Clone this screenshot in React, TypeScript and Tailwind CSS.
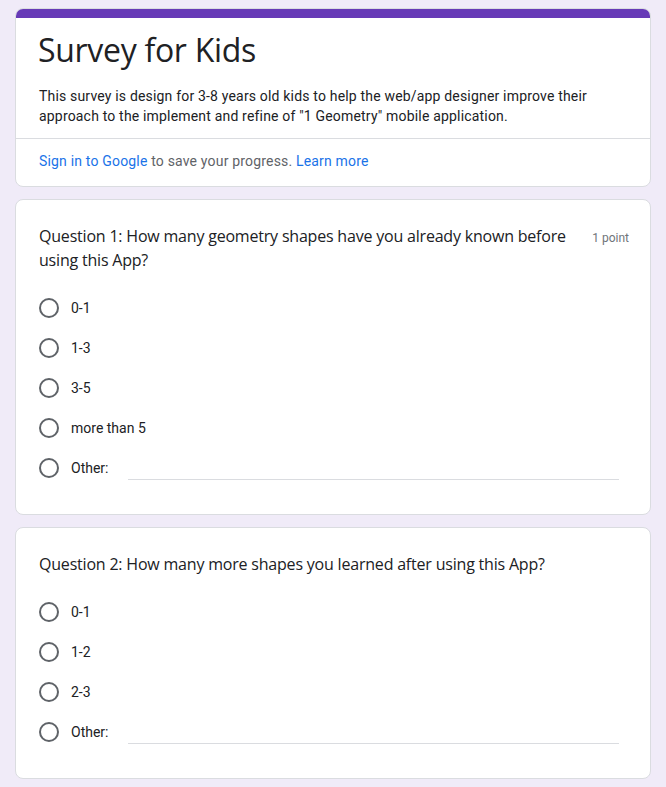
import React from "react";

type Question = {
  title: string;
  points?: string;
  options: string[];
};

const questions: Question[] = [
  {
    title:
      "Question 1: How many geometry shapes have you already known before using this App?",
    points: "1 point",
    options: ["0-1", "1-3", "3-5", "more than 5"],
  },
  {
    title: "Question 2: How many more shapes you learned after using this App?",
    options: ["0-1", "1-2", "2-3"],
  },
];

function Radio() {
  return (
    <span className="block w-5 h-5 shrink-0 rounded-full border-2 border-[#5f6368]" />
  );
}

function QuestionCard({ q }: { q: Question }) {
  return (
    <div className="mt-3 rounded-lg border border-[#dadce0] bg-white px-[23px] pt-6 pb-[26px]">
      <div className="flex items-start justify-between gap-2">
        <h2 className="text-base leading-6 text-[#202124] font-['Open_Sans',sans-serif] tracking-[-0.2px]">
          {q.title}
        </h2>
        {q.points && (
          <span className="shrink-0 pt-[5px] -mr-[2px] text-xs leading-[18px] text-[#70757a] whitespace-nowrap">
            {q.points}
          </span>
        )}
      </div>

      <div className="mt-4">
        {q.options.map((opt) => (
          <label key={opt} className="flex items-center gap-3 h-10">
            <Radio />
            <span className="text-sm text-[#202124]">{opt}</span>
          </label>
        ))}
        <label className="flex items-center h-10">
          <Radio />
          <span className="ml-3 text-sm text-[#202124]">Other:</span>
          <span className="ml-[20px] mr-2 flex-1 self-end mb-[8px] border-b border-[#dadce0]" />
        </label>
      </div>
    </div>
  );
}

export default function App() {
  return (
    <div className="min-h-screen bg-[#f0ebf8] px-[15px] pt-2 pb-3 font-['Roboto',sans-serif]">

      {/* HEADER */}
      <div className="rounded-lg border border-[#dadce0] bg-white overflow-hidden">
        <div className="h-[10px] -mx-px -mt-px bg-[#673ab7]" />

        <div className="px-[23px] pt-3 pb-3 border-b border-[#dadce0]">
          <h1 className="-ml-px text-[32px] leading-10 text-[#202124] font-['Open_Sans',sans-serif] tracking-[-0.3px]">
            Survey for Kids
          </h1>
          <p className="mt-4 text-sm leading-5 text-[#202124] tracking-[0.18px]">
            This survey is design for 3-8 years old kids to help the web/app designer improve their
            approach to the implement and refine of "1 Geometry" mobile application.
          </p>
        </div>

        <div className="px-[23px] pt-3 pb-[15px] text-sm leading-5 text-[#5f6368] tracking-[0.18px]">
          <a className="text-[#1a73e8]">Sign in to Google</a> to save your progress.{" "}
          <a className="text-[#1a73e8]">Learn more</a>
        </div>
      </div>

      {questions.map((q) => (
        <QuestionCard key={q.title} q={q} />
      ))}
    </div>
  );
}
